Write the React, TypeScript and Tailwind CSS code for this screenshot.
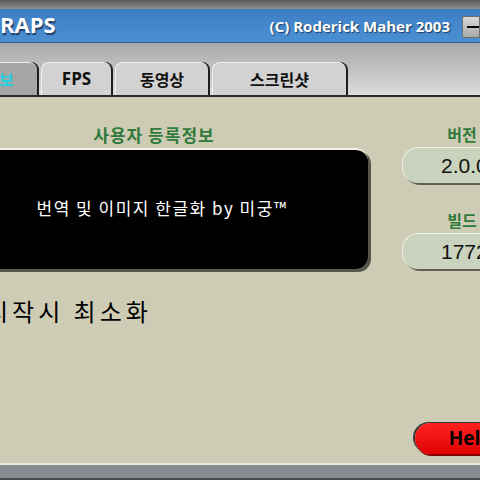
import React from 'react';

const kr = { fontFamily: '"Noto Sans CJK KR", "Noto Sans", sans-serif' };

const tabs = [
  { label: '정보', w: 'w-[77px] -ml-[40px]', active: true },
  { label: 'FPS', w: 'w-[70px]' },
  { label: '동영상', w: 'w-[93px]' },
  { label: '스크린샷', w: 'w-[134px]' },
];

const InfoField = ({ label, value }: { label: string; value: string }) => (
  <div className="flex flex-col w-[120px] shrink-0">
    <div className="text-center text-[16px] font-bold text-[#2f7a3c] leading-[20px] h-[26px] pt-[3px]" style={kr}>
      {label}
    </div>
    <div className="h-[36px] rounded-[16px] bg-[#c9d3bd] border-t border-l border-[#eef1e8] shadow-[2px_2px_0_#5e5f52] flex items-center pl-[38px] text-[21px] text-[#111] font-['Liberation_Sans',sans-serif]">
      {value}
    </div>
  </div>
);

export default function App() {
  return (
    <div className="w-[480px] h-[480px] overflow-hidden flex flex-col bg-[#cfccb5]" style={kr}>
      {/* window frame top */}
      <div className="h-[9px] bg-gradient-to-b from-[#5c5c5c] to-[#8d8d8d]" />

      {/* title bar */}
      <div className="h-[34px] bg-gradient-to-b from-[#3e7fc4] to-[#4b8fd3] border-b border-[#2f5f95] flex items-center">
        <span className="text-white font-bold text-[22px] leading-none font-['Open_Sans',sans-serif] [text-shadow:1px_2px_1px_#1d3c66] -mt-[4px]">
          RAPS
        </span>
        <span className="ml-auto mr-[12px] text-white font-bold text-[15px] font-['Open_Sans',sans-serif] [text-shadow:1px_1px_1px_#1d3c66] pt-[2px]">
          (C) Roderick Maher 2003
        </span>
        <div className="w-[18px] h-[22px] bg-gradient-to-b from-[#d8d8d8] to-[#a9a9a9] border border-[#6d6d6d] rounded-l-[2px] flex items-center pl-[4px] mt-[2px]">
          <div className="w-[14px] h-[2px] bg-black" />
        </div>
      </div>

      {/* tab strip */}
      <div className="h-[54px] bg-gradient-to-b from-[#a9a9a9] to-[#dcdcdc] flex items-end gap-[4px] border-b-2 border-[#2b2b2b]">
        {tabs.map((t) => (
          <div
            key={t.label}
            className={`${t.w} shrink-0 h-[33px] rounded-t-[8px] flex items-center justify-center font-bold border-t border-l border-[#f0f0f0] shadow-[2px_0_0_#1e1e1e] ${
              t.active ? 'bg-[#a6a6a6] text-[#1fd0e0]' : 'bg-[#d2d2d2] text-[#111]'
            } ${t.label === 'FPS' ? "text-[17px] font-['Open_Sans',sans-serif]" : 'text-[16px]'}`}
          >
            {t.label}
          </div>
        ))}
      </div>

      {/* content */}
      <div className="flex-1 flex flex-col">
        <div className="flex pt-[25px] gap-[34px]">
          <div className="-ml-[40px] w-[408px] shrink-0 flex flex-col">
            <div className="text-center text-[17px] font-bold text-[#2f7a3c] leading-[20px] h-[26px] pt-[3px] -ml-[20px] tracking-[1px]">
              사용자 등록정보
            </div>
            <div className="h-[121px] rounded-[13px] bg-black border-t-2 border-[#f2f2ea] shadow-[3px_3px_0_#55564c] flex items-center justify-center text-white text-[17px] tracking-[1.5px] pb-[4px] -ml-[4px]">
              번역 및 이미지 한글화 by 미궁™
            </div>
          </div>
          <div className="flex flex-col gap-[24px] -mt-[1px] shrink-0">
            <InfoField label="버전" value="2.0.0" />
            <InfoField label="빌드" value="1772" />
          </div>
        </div>

        <div className="mt-[26px] -ml-[14px] text-[24px] text-black tracking-[4px] leading-[32px]">
          시작시 최소화
        </div>

        <div className="mt-auto mb-[9px] flex justify-end -mr-[50px]">
          <div className="w-[115px] h-[31px] shrink-0 rounded-full bg-gradient-to-b from-[#ff2020] to-[#e00000] shadow-[-2px_-1px_0_#3a3a3a,1px_2px_0_#8a0000] flex items-center justify-center text-black font-bold text-[19px] font-['Open_Sans',sans-serif] pr-[4px]">
            Help
          </div>
        </div>
      </div>

      {/* bottom frame */}
      <div className="h-[2px] bg-[#ebe9da]" />
      <div className="h-[15px] bg-[#898d91] border-b-2 border-[#4a4c4e]" />
    </div>
  );
}
